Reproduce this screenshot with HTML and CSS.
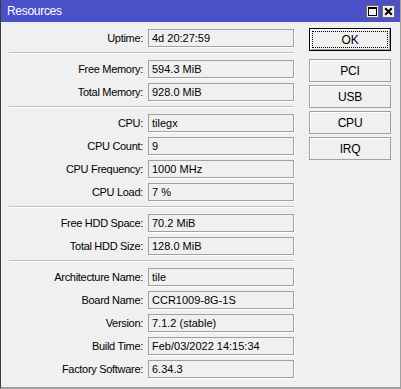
FILE: index.html
```html
<!DOCTYPE html>
<html lang="en">
<head>
    <meta charset="UTF-8">
    <title>Resources</title>
    <link rel="stylesheet" href="styles.css">
</head>
<body>

<div class="window">
    <div class="titlebar">
        <span class="title">Resources</span>
        <div class="title-buttons">
            <span class="tbtn">
                <svg width="9" height="9" viewBox="0 0 9 9">
                    <rect x="0.5" y="0.5" width="8" height="8" fill="none" stroke="#000"/>
                    <rect x="0" y="0" width="9" height="2" fill="#000"/>
                </svg>
            </span>
            <span class="tbtn">
                <svg width="9" height="9" viewBox="0 0 9 9">
                    <path d="M1.2 1.2 L7.8 7.8 M7.8 1.2 L1.2 7.8" stroke="#000" stroke-width="2"/>
                </svg>
            </span>
        </div>
    </div>

    <div class="content">
        <div class="fields">
            <div class="row"><span class="label">Uptime:</span><div class="value">4d 20:27:59</div></div>
            <div class="sep"></div>
            <div class="row"><span class="label">Free Memory:</span><div class="value">594.3 MiB</div></div>
            <div class="row"><span class="label">Total Memory:</span><div class="value">928.0 MiB</div></div>
            <div class="sep"></div>
            <div class="row"><span class="label">CPU:</span><div class="value">tilegx</div></div>
            <div class="row"><span class="label">CPU Count:</span><div class="value">9</div></div>
            <div class="row"><span class="label">CPU Frequency:</span><div class="value">1000 MHz</div></div>
            <div class="row"><span class="label">CPU Load:</span><div class="value">7 %</div></div>
            <div class="sep"></div>
            <div class="row"><span class="label">Free HDD Space:</span><div class="value">70.2 MiB</div></div>
            <div class="row"><span class="label">Total HDD Size:</span><div class="value">128.0 MiB</div></div>
            <div class="sep"></div>
            <div class="row"><span class="label">Architecture Name:</span><div class="value">tile</div></div>
            <div class="row"><span class="label">Board Name:</span><div class="value">CCR1009-8G-1S</div></div>
            <div class="row"><span class="label">Version:</span><div class="value">7.1.2 (stable)</div></div>
            <div class="row"><span class="label">Build Time:</span><div class="value">Feb/03/2022 14:15:34</div></div>
            <div class="row"><span class="label">Factory Software:</span><div class="value">6.34.3</div></div>
        </div>

        <div class="buttons">
            <button type="button" class="btn btn-default">OK</button>
            <div class="btn-group">
                <button type="button" class="btn">PCI</button>
                <button type="button" class="btn">USB</button>
                <button type="button" class="btn">CPU</button>
                <button type="button" class="btn">IRQ</button>
            </div>
        </div>
    </div>
</div>

</body>
</html>
```

FILE: styles.css
```css
body {
    margin: 0;
    padding: 0;
    font-family: "Liberation Sans", Arial, sans-serif;
    font-size: 11px;
    color: #000;
    background-color: #f0f0f0;
}

.window {
    width: 401px;
    height: 389px;
    box-sizing: border-box;
    background-color: #f0f0f0;
    border-left: 1px solid #3c3c3c;
    border-right: 1px solid #a0a0a0;
    border-bottom: 2px solid #a0a0a0;
    overflow: hidden;
}

.titlebar {
    height: 22px;
    margin-left: -1px;
    margin-right: -1px;
    background-color: #4b4fc8;
    display: flex;
    align-items: center;
    justify-content: space-between;
    padding: 0 6px 0 7px;
}

.title {
    color: #fff;
    font-size: 12px;
    letter-spacing: -0.3px;
}

.title-buttons {
    display: flex;
    gap: 3px;
}

.tbtn {
    width: 13px;
    height: 13px;
    box-sizing: border-box;
    background-color: #f0f0f0;
    border: 1px solid #6a6a6a;
    display: flex;
    align-items: center;
    justify-content: center;
}

.tbtn svg {
    display: block;
}

.content {
    display: flex;
    gap: 15px;
}

.fields {
    display: flex;
    flex-direction: column;
    gap: 5px;
    padding: 7px 0 0 8px;
}

.row {
    display: grid;
    grid-template-columns: 134px 146px;
    column-gap: 5px;
    height: 18px;
}

.label {
    text-align: right;
    line-height: 18px;
    white-space: nowrap;
    letter-spacing: -0.3px;
}

.value {
    border: 1px solid #a0a0a0;
    box-shadow: 1px 1px 0 #fff;
    line-height: 16px;
    padding: 0 3px;
    white-space: nowrap;
    overflow: hidden;
}

.sep {
    width: 285px;
    height: 1px;
    background-color: #c0c0c0;
    border-bottom: 1px solid #fff;
    margin-bottom: 1px;
}

.buttons {
    display: flex;
    flex-direction: column;
    gap: 8px;
    padding-top: 6px;
}

.btn-group {
    display: flex;
    flex-direction: column;
    gap: 3px;
}

.btn {
    width: 82px;
    height: 23px;
    margin: 0;
    padding: 0;
    font-family: "Liberation Sans", Arial, sans-serif;
    font-size: 12px;
    letter-spacing: -0.2px;
    color: #000;
    background-color: #f0f0f0;
    border: 1px solid #a0a0a0;
    box-shadow: inset 1px 1px 0 #fff;
    cursor: pointer;
}

.btn-default {
    border: 1px solid #000;
    box-shadow: inset 1px 1px 0 #fff, inset -1px -1px 0 #a0a0a0;
    outline: 1px dotted #000;
    outline-offset: -4px;
}
```
